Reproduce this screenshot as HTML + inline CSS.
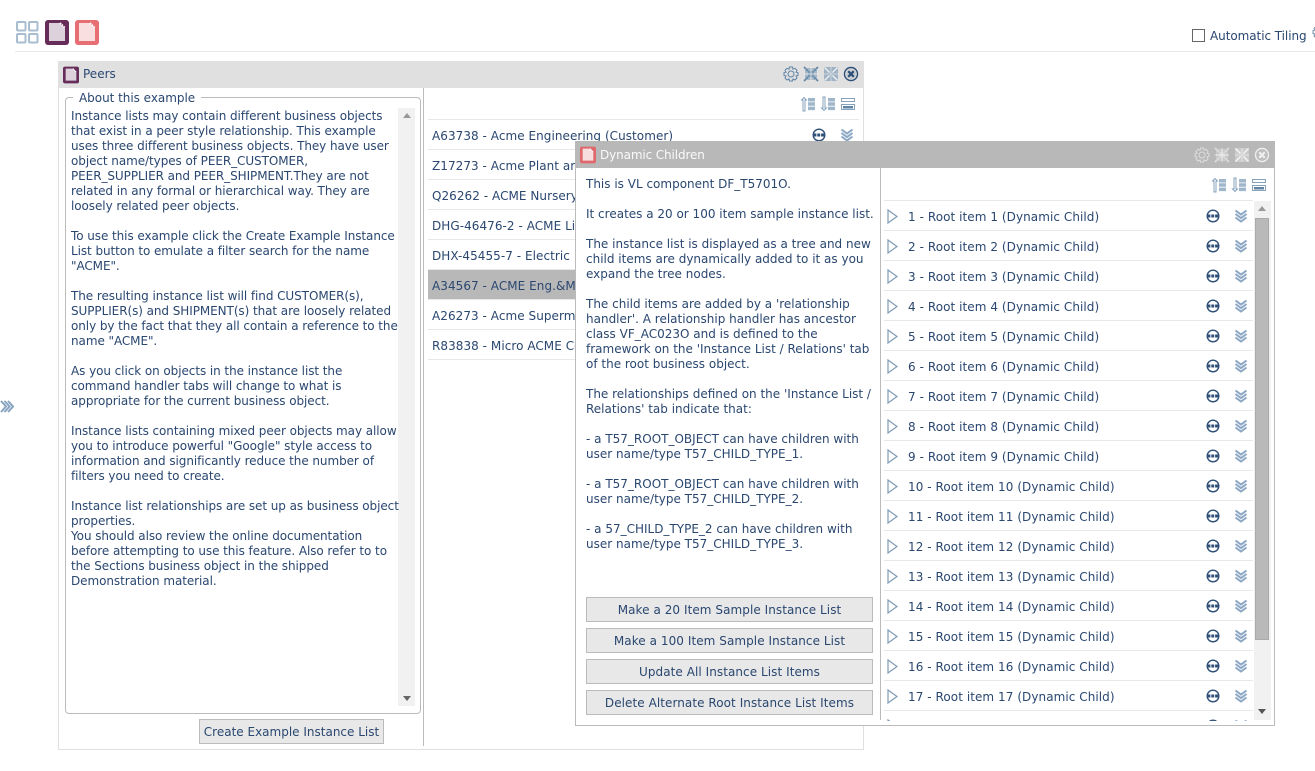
<!DOCTYPE html>
<html><head><meta charset="utf-8"><style>
html,body{margin:0;padding:0;background:#fff;width:1315px;height:771px;overflow:hidden}
body{position:relative;font-family:"DejaVu Sans","Liberation Sans",sans-serif;font-size:12px;color:#2a4770}
div{position:absolute;box-sizing:border-box}
svg{position:absolute;display:block;overflow:visible}
.t{white-space:pre;line-height:15px}
.btn{background:#e8e8e8;border:1px solid #bbb;text-align:center;line-height:25px;white-space:nowrap;letter-spacing:.06px}
.rule{background:#e8e8e8;height:1px}
.row{left:0;height:30px;width:369px;border-bottom:1px solid #e8e8e8;line-height:32px;white-space:nowrap;letter-spacing:.06px}
.pr{left:0;width:431px;height:30px;border-bottom:1px solid #e8e8e8;line-height:32px;white-space:nowrap;padding-left:4px;letter-spacing:.05px}
</style></head><body>
<svg width="0" height="0" style="position:absolute"><defs>
<symbol id="doc" viewBox="0 0 24 25"><rect x="0" y="0" width="24" height="25" rx="3" fill="currentColor"/><path d="M4 3H15L20 8V21H4Z" fill="#fff" opacity=".78"/><path d="M15 3L20 8" stroke="#fff" stroke-width="2" stroke-dasharray="1.5 1"/></symbol>
<symbol id="gear" viewBox="0 0 16 16"><path d="M6.5 1H9.5L10 3.2L12 2.3L14 4.3L13 6.2L15 6.7V9.5L13 10L14 12L12 14L10 13L9.5 15H6.5L6 13L4 14L2 12L3 10L1 9.5V6.7L3 6.2L2 4.3L4 2.3L6 3.2Z" fill="none" stroke="currentColor"/><circle cx="8" cy="8" r="3" fill="none" stroke="currentColor"/></symbol>
<symbol id="min" viewBox="0 0 16 16"><rect x="2" y="2" width="12" height="12" fill="currentColor" opacity=".45"/><rect x="5" y="5" width="6" height="6" fill="currentColor" opacity=".6"/><path d="M1 1L5.500 5.500M15 1L10.500 5.500M1 15L5.500 10.500M15 15L10.500 10.500" stroke="currentColor" stroke-width="1.700" stroke-dasharray="2.500 .6"/><path d="M8 1V15M1 8H15" stroke="#fff" stroke-width=".9" opacity=".7"/></symbol>
<symbol id="max" viewBox="0 0 16 16"><rect x="1" y="1" width="14" height="14" fill="currentColor" opacity=".5"/><path d="M1.500 1.500L6.500 6.500M14.500 1.500L9.500 6.500M1.500 14.500L6.500 9.500M14.500 14.500L9.500 9.500" stroke="#fff" stroke-width="1.300" opacity=".85"/><path d="M8 1V15M1 8H15" stroke="#fff" stroke-width=".8" opacity=".6"/></symbol>
<symbol id="close" viewBox="0 0 16 16"><circle cx="8" cy="8" r="6.500" fill="none" stroke="currentColor" stroke-width="1.400"/><circle cx="8" cy="8" r="5" fill="currentColor" opacity=".12"/><path d="M5.200 5.200L10.800 10.800M10.800 5.200L5.200 10.800" stroke="currentColor" stroke-width="2.200"/></symbol>
<symbol id="up" viewBox="0 0 16 16"><path d="M3 15V4H1.500L4 1.500L6.500 4H5V15Z" fill="#fff" stroke="#7d9cb8" stroke-width=".9"/><path d="M8 2h7v3.500H8zM8 6.300h7v3.500H8zM8 10.600h7v3.500H8z" fill="#9fb6cb"/></symbol>
<symbol id="down" viewBox="0 0 16 16"><path d="M3 1V12H1.500L4 14.500L6.500 12H5V1Z" fill="#fff" stroke="#7d9cb8" stroke-width=".9"/><path d="M8 2h7v3.500H8zM8 6.300h7v3.500H8zM8 10.600h7v3.500H8z" fill="#9fb6cb"/></symbol>
<symbol id="lst" viewBox="0 0 16 16"><path d="M1.500 2.500H14.500V5.500H1.500ZM1.500 8.500H14.500V13.500H1.500Z" fill="none" stroke="#86a3bd" stroke-width="1"/><path d="M3 10H13V12.500H3Z" fill="#5f84a6"/></symbol>
<symbol id="dots" viewBox="0 0 14 14"><circle cx="7" cy="7" r="5.800" fill="#fff" stroke="#2d4f78" stroke-width="1.400"/><path d="M1.500 7H12.500" stroke="#2d4f78" stroke-width="3" stroke-dasharray="2.900 .9"/></symbol>
<symbol id="chev" viewBox="0 0 14 14"><g fill="none" stroke-linejoin="miter"><path d="M1.500 1.500L7 5.500L12.500 1.500M1.500 5L7 9L12.500 5M1.500 8.500L7 12.500L12.500 8.500" stroke="#8aa6c3" stroke-width="2"/><path d="M2 4L7 7.500L12 4M2 7.500L7 11L12 7.500" stroke="#dfe8f1" stroke-width=".7"/></g></symbol>
<symbol id="tri" viewBox="0 0 11 15"><path d="M1 1L10 7.500L1 14Z" fill="#fff" stroke="#7f9bb5" stroke-width="1.200"/></symbol>
</defs></svg>

<!-- top bar -->
<svg style="left:16px;top:21px" width="23" height="23"><g fill="#fff" stroke="#a9bdd0" stroke-width="2"><rect x="1" y="1" width="8.500" height="8.500" rx="1"/><rect x="13" y="1" width="8.500" height="8.500" rx="1"/><rect x="1" y="13" width="8.500" height="8.500" rx="1"/><rect x="13" y="13" width="8.500" height="8.500" rx="1"/></g></svg>
<svg style="left:45px;top:20px;color:#662d5b" width="24" height="25"><use href="#doc"/></svg>
<svg style="left:75px;top:20px;color:#e76f73" width="24" height="25"><use href="#doc"/></svg>
<div class="rule" style="left:15px;top:51px;width:1300px"></div>
<div style="left:1192px;top:29px;width:13px;height:13px;border:1px solid #666;background:#fff"></div>
<div class="t" style="left:1210px;top:28px;letter-spacing:-.06px;line-height:17px">Automatic Tiling</div>
<svg style="left:1312px;top:24px;color:#6f8fac" width="16" height="16"><use href="#gear"/></svg>
<svg style="left:0;top:400px" width="14" height="13"><path d="M1 1L6 6.500L1 12M4.500 1L9.500 6.500L4.500 12M8 1L13 6.500L8 12" fill="none" stroke="#86a3c0" stroke-width="2"/></svg>

<!-- Peers -->
<div style="left:58px;top:61px;width:806px;height:689px;border:1px solid #e0e0e0;background:#fff">
 <div style="left:-1px;top:-1px;width:806px;height:27px;background:#e0e0e0"></div>
 <svg style="left:4px;top:4px;color:#662d5b" width="16" height="18"><use href="#doc"/></svg>
 <div class="t" style="left:24px;top:5px">Peers</div>
 <svg style="left:724px;top:4px;color:#5f84a6" width="16" height="16"><use href="#gear"/></svg>
 <svg style="left:744px;top:4px;color:#5f84a6" width="16" height="16"><use href="#min"/></svg>
 <svg style="left:764px;top:4px;color:#5f84a6" width="16" height="16"><use href="#max"/></svg>
 <svg style="left:784px;top:4px;color:#2d4f78" width="16" height="16"><use href="#close"/></svg>
 <div style="left:364px;top:26px;width:1px;height:658px;background:#bbb"></div>
 <div style="left:6px;top:35px;width:356px;height:617px;border:1px solid #bbb;border-radius:4px"></div>
 <div class="t" style="left:14px;top:29px;background:#fff;padding:0 6px;letter-spacing:-.03px">About this example</div>
 <div style="left:339px;top:46px;width:17px;height:598px;background:#f1f1f1"></div>
 <svg style="left:344px;top:51px" width="8" height="5"><path d="M0 5L4 0L8 5Z" fill="#999"/></svg>
 <svg style="left:344px;top:634px" width="8" height="5"><path d="M0 0L4 5L8 0Z" fill="#666"/></svg>
 <div class="t" style="left:12px;top:47px;letter-spacing:-.07px">Instance lists may contain different business objects
that exist in a peer style relationship. This example
uses three different business objects. They have user
object name/types of PEER_CUSTOMER,
PEER_SUPPLIER and PEER_SHIPMENT.They are not
related in any formal or hierarchical way. They are
loosely related peer objects.

To use this example click the Create Example Instance
List button to emulate a filter search for the name
"ACME".

The resulting instance list will find CUSTOMER(s),
SUPPLIER(s) and SHIPMENT(s) that are loosely related
only by the fact that they all contain a reference to the
name "ACME".

As you click on objects in the instance list the
command handler tabs will change to what is
appropriate for the current business object.

Instance lists containing mixed peer objects may allow
you to introduce powerful "Google" style access to
information and significantly reduce the number of
filters you need to create.

Instance list relationships are set up as business object
properties.
You should also review the online documentation
before attempting to use this feature. Also refer to to
the Sections business object in the shipped
Demonstration material.</div>
 <div class="btn" style="left:140px;top:657px;width:185px;height:25px;letter-spacing:0">Create Example Instance List</div>
 <svg style="left:741px;top:34px" width="16" height="16"><use href="#up"/></svg>
 <svg style="left:761px;top:34px" width="16" height="16"><use href="#down"/></svg>
 <svg style="left:781px;top:34px" width="16" height="16"><use href="#lst"/></svg>
 <div style="left:369px;top:57px;width:431px;height:240px">
  <div class="rule" style="left:0;top:0;width:431px"></div>
  <div class="pr" style="top:1px">A63738 - Acme Engineering (Customer)</div>
  <div class="pr" style="top:31px">Z17273 - Acme Plant and Equipment</div>
  <div class="pr" style="top:61px">Q26262 - ACME Nursery</div>
  <div class="pr" style="top:91px">DHG-46476-2 - ACME Limited</div>
  <div class="pr" style="top:121px">DHX-45455-7 - Electric</div>
  <div class="pr" style="top:151px;background:#b8b8b8">A34567 - ACME Eng.&amp;Manufacturing</div>
  <div class="pr" style="top:181px">A26273 - Acme Supermarket</div>
  <div class="pr" style="top:211px">R83838 - Micro ACME Corporation</div>
 </div>
 <svg style="left:753px;top:66px" width="14" height="14"><use href="#dots"/></svg>
 <svg style="left:781px;top:66px" width="14" height="14"><use href="#chev"/></svg>
</div>

<!-- Dynamic Children -->
<div style="left:575px;top:141px;width:700px;height:585px;border:1px solid #bbb;background:#fff">
 <div style="left:-1px;top:-1px;width:700px;height:27px;background:#b8b8b8"></div>
 <svg style="left:4px;top:4px;color:#e0676b" width="16" height="18"><use href="#doc"/></svg>
 <div class="t" style="left:24px;top:6px;color:#fafafa;letter-spacing:-.12px">Dynamic Children</div>
 <svg style="left:618px;top:5px;color:#ddd" width="16" height="16"><use href="#gear"/></svg>
 <svg style="left:638px;top:5px;color:#ddd" width="16" height="16"><use href="#min"/></svg>
 <svg style="left:658px;top:5px;color:#ddd" width="16" height="16"><use href="#max"/></svg>
 <svg style="left:678px;top:5px;color:#eee" width="16" height="16"><use href="#close"/></svg>
 <div style="left:304px;top:26px;width:1px;height:552px;background:#bbb"></div>
 <div class="t" style="left:10px;top:35px">This is VL component DF_T5701O.

It creates a 20 or 100 item sample instance list.

The instance list is displayed as a tree and new
child items are dynamically added to it as you
expand the tree nodes.

The child items are added by a 'relationship
handler'. A relationship handler has ancestor
class VF_AC023O and is defined to the
framework on the 'Instance List / Relations' tab
of the root business object.

The relationships defined on the 'Instance List /
Relations' tab indicate that:

- a T57_ROOT_OBJECT can have children with
user name/type T57_CHILD_TYPE_1.

- a T57_ROOT_OBJECT can have children with
user name/type T57_CHILD_TYPE_2.

- a 57_CHILD_TYPE_2 can have children with
user name/type T57_CHILD_TYPE_3.</div>
 <div class="btn" style="left:10px;top:455px;width:287px;height:25px">Make a 20 Item Sample Instance List</div>
 <div class="btn" style="left:10px;top:486px;width:287px;height:25px">Make a 100 Item Sample Instance List</div>
 <div class="btn" style="left:10px;top:517px;width:287px;height:25px">Update All Instance List Items</div>
 <div class="btn" style="left:10px;top:548px;width:287px;height:25px">Delete Alternate Root Instance List Items</div>
 <svg style="left:635px;top:35px" width="16" height="16"><use href="#up"/></svg>
 <svg style="left:655px;top:35px" width="16" height="16"><use href="#down"/></svg>
 <svg style="left:675px;top:35px" width="16" height="16"><use href="#lst"/></svg>
 <div style="left:308px;top:58px;width:369px;height:521px;overflow:hidden">
  <div class="rule" style="left:0;top:0;width:369px"></div>
  <div class="row" style="top:1px"><svg style="left:3px;top:8px" width="11" height="15"><use href="#tri"/></svg><span style="position:absolute;left:24px">1 - Root item 1 (Dynamic Child)</span><svg style="left:322px;top:8px" width="14" height="14"><use href="#dots"/></svg><svg style="left:350px;top:8px" width="14" height="14"><use href="#chev"/></svg></div>
  <div class="row" style="top:31px"><svg style="left:3px;top:8px" width="11" height="15"><use href="#tri"/></svg><span style="position:absolute;left:24px">2 - Root item 2 (Dynamic Child)</span><svg style="left:322px;top:8px" width="14" height="14"><use href="#dots"/></svg><svg style="left:350px;top:8px" width="14" height="14"><use href="#chev"/></svg></div>
  <div class="row" style="top:61px"><svg style="left:3px;top:8px" width="11" height="15"><use href="#tri"/></svg><span style="position:absolute;left:24px">3 - Root item 3 (Dynamic Child)</span><svg style="left:322px;top:8px" width="14" height="14"><use href="#dots"/></svg><svg style="left:350px;top:8px" width="14" height="14"><use href="#chev"/></svg></div>
  <div class="row" style="top:91px"><svg style="left:3px;top:8px" width="11" height="15"><use href="#tri"/></svg><span style="position:absolute;left:24px">4 - Root item 4 (Dynamic Child)</span><svg style="left:322px;top:8px" width="14" height="14"><use href="#dots"/></svg><svg style="left:350px;top:8px" width="14" height="14"><use href="#chev"/></svg></div>
  <div class="row" style="top:121px"><svg style="left:3px;top:8px" width="11" height="15"><use href="#tri"/></svg><span style="position:absolute;left:24px">5 - Root item 5 (Dynamic Child)</span><svg style="left:322px;top:8px" width="14" height="14"><use href="#dots"/></svg><svg style="left:350px;top:8px" width="14" height="14"><use href="#chev"/></svg></div>
  <div class="row" style="top:151px"><svg style="left:3px;top:8px" width="11" height="15"><use href="#tri"/></svg><span style="position:absolute;left:24px">6 - Root item 6 (Dynamic Child)</span><svg style="left:322px;top:8px" width="14" height="14"><use href="#dots"/></svg><svg style="left:350px;top:8px" width="14" height="14"><use href="#chev"/></svg></div>
  <div class="row" style="top:181px"><svg style="left:3px;top:8px" width="11" height="15"><use href="#tri"/></svg><span style="position:absolute;left:24px">7 - Root item 7 (Dynamic Child)</span><svg style="left:322px;top:8px" width="14" height="14"><use href="#dots"/></svg><svg style="left:350px;top:8px" width="14" height="14"><use href="#chev"/></svg></div>
  <div class="row" style="top:211px"><svg style="left:3px;top:8px" width="11" height="15"><use href="#tri"/></svg><span style="position:absolute;left:24px">8 - Root item 8 (Dynamic Child)</span><svg style="left:322px;top:8px" width="14" height="14"><use href="#dots"/></svg><svg style="left:350px;top:8px" width="14" height="14"><use href="#chev"/></svg></div>
  <div class="row" style="top:241px"><svg style="left:3px;top:8px" width="11" height="15"><use href="#tri"/></svg><span style="position:absolute;left:24px">9 - Root item 9 (Dynamic Child)</span><svg style="left:322px;top:8px" width="14" height="14"><use href="#dots"/></svg><svg style="left:350px;top:8px" width="14" height="14"><use href="#chev"/></svg></div>
  <div class="row" style="top:271px"><svg style="left:3px;top:8px" width="11" height="15"><use href="#tri"/></svg><span style="position:absolute;left:24px">10 - Root item 10 (Dynamic Child)</span><svg style="left:322px;top:8px" width="14" height="14"><use href="#dots"/></svg><svg style="left:350px;top:8px" width="14" height="14"><use href="#chev"/></svg></div>
  <div class="row" style="top:301px"><svg style="left:3px;top:8px" width="11" height="15"><use href="#tri"/></svg><span style="position:absolute;left:24px">11 - Root item 11 (Dynamic Child)</span><svg style="left:322px;top:8px" width="14" height="14"><use href="#dots"/></svg><svg style="left:350px;top:8px" width="14" height="14"><use href="#chev"/></svg></div>
  <div class="row" style="top:331px"><svg style="left:3px;top:8px" width="11" height="15"><use href="#tri"/></svg><span style="position:absolute;left:24px">12 - Root item 12 (Dynamic Child)</span><svg style="left:322px;top:8px" width="14" height="14"><use href="#dots"/></svg><svg style="left:350px;top:8px" width="14" height="14"><use href="#chev"/></svg></div>
  <div class="row" style="top:361px"><svg style="left:3px;top:8px" width="11" height="15"><use href="#tri"/></svg><span style="position:absolute;left:24px">13 - Root item 13 (Dynamic Child)</span><svg style="left:322px;top:8px" width="14" height="14"><use href="#dots"/></svg><svg style="left:350px;top:8px" width="14" height="14"><use href="#chev"/></svg></div>
  <div class="row" style="top:391px"><svg style="left:3px;top:8px" width="11" height="15"><use href="#tri"/></svg><span style="position:absolute;left:24px">14 - Root item 14 (Dynamic Child)</span><svg style="left:322px;top:8px" width="14" height="14"><use href="#dots"/></svg><svg style="left:350px;top:8px" width="14" height="14"><use href="#chev"/></svg></div>
  <div class="row" style="top:421px"><svg style="left:3px;top:8px" width="11" height="15"><use href="#tri"/></svg><span style="position:absolute;left:24px">15 - Root item 15 (Dynamic Child)</span><svg style="left:322px;top:8px" width="14" height="14"><use href="#dots"/></svg><svg style="left:350px;top:8px" width="14" height="14"><use href="#chev"/></svg></div>
  <div class="row" style="top:451px"><svg style="left:3px;top:8px" width="11" height="15"><use href="#tri"/></svg><span style="position:absolute;left:24px">16 - Root item 16 (Dynamic Child)</span><svg style="left:322px;top:8px" width="14" height="14"><use href="#dots"/></svg><svg style="left:350px;top:8px" width="14" height="14"><use href="#chev"/></svg></div>
  <div class="row" style="top:481px"><svg style="left:3px;top:8px" width="11" height="15"><use href="#tri"/></svg><span style="position:absolute;left:24px">17 - Root item 17 (Dynamic Child)</span><svg style="left:322px;top:8px" width="14" height="14"><use href="#dots"/></svg><svg style="left:350px;top:8px" width="14" height="14"><use href="#chev"/></svg></div>
  <div class="row" style="top:511px"><svg style="left:3px;top:8px" width="11" height="15"><use href="#tri"/></svg><span style="position:absolute;left:24px">18 - Root item 18 (Dynamic Child)</span><svg style="left:322px;top:8px" width="14" height="14"><use href="#dots"/></svg><svg style="left:350px;top:8px" width="14" height="14"><use href="#chev"/></svg></div>
 </div>
 <div style="left:678px;top:59px;width:17px;height:519px;background:#f1f1f1"></div>
 <div style="left:679px;top:76px;width:14px;height:422px;background:#b9b9b9;border:1px solid #aaa"></div>
 <svg style="left:682px;top:64px" width="8" height="5"><path d="M0 5L4 0L8 5Z" fill="#999"/></svg>
 <svg style="left:682px;top:567px" width="8" height="5"><path d="M0 0L4 5L8 0Z" fill="#555"/></svg>
</div>
</body></html>
